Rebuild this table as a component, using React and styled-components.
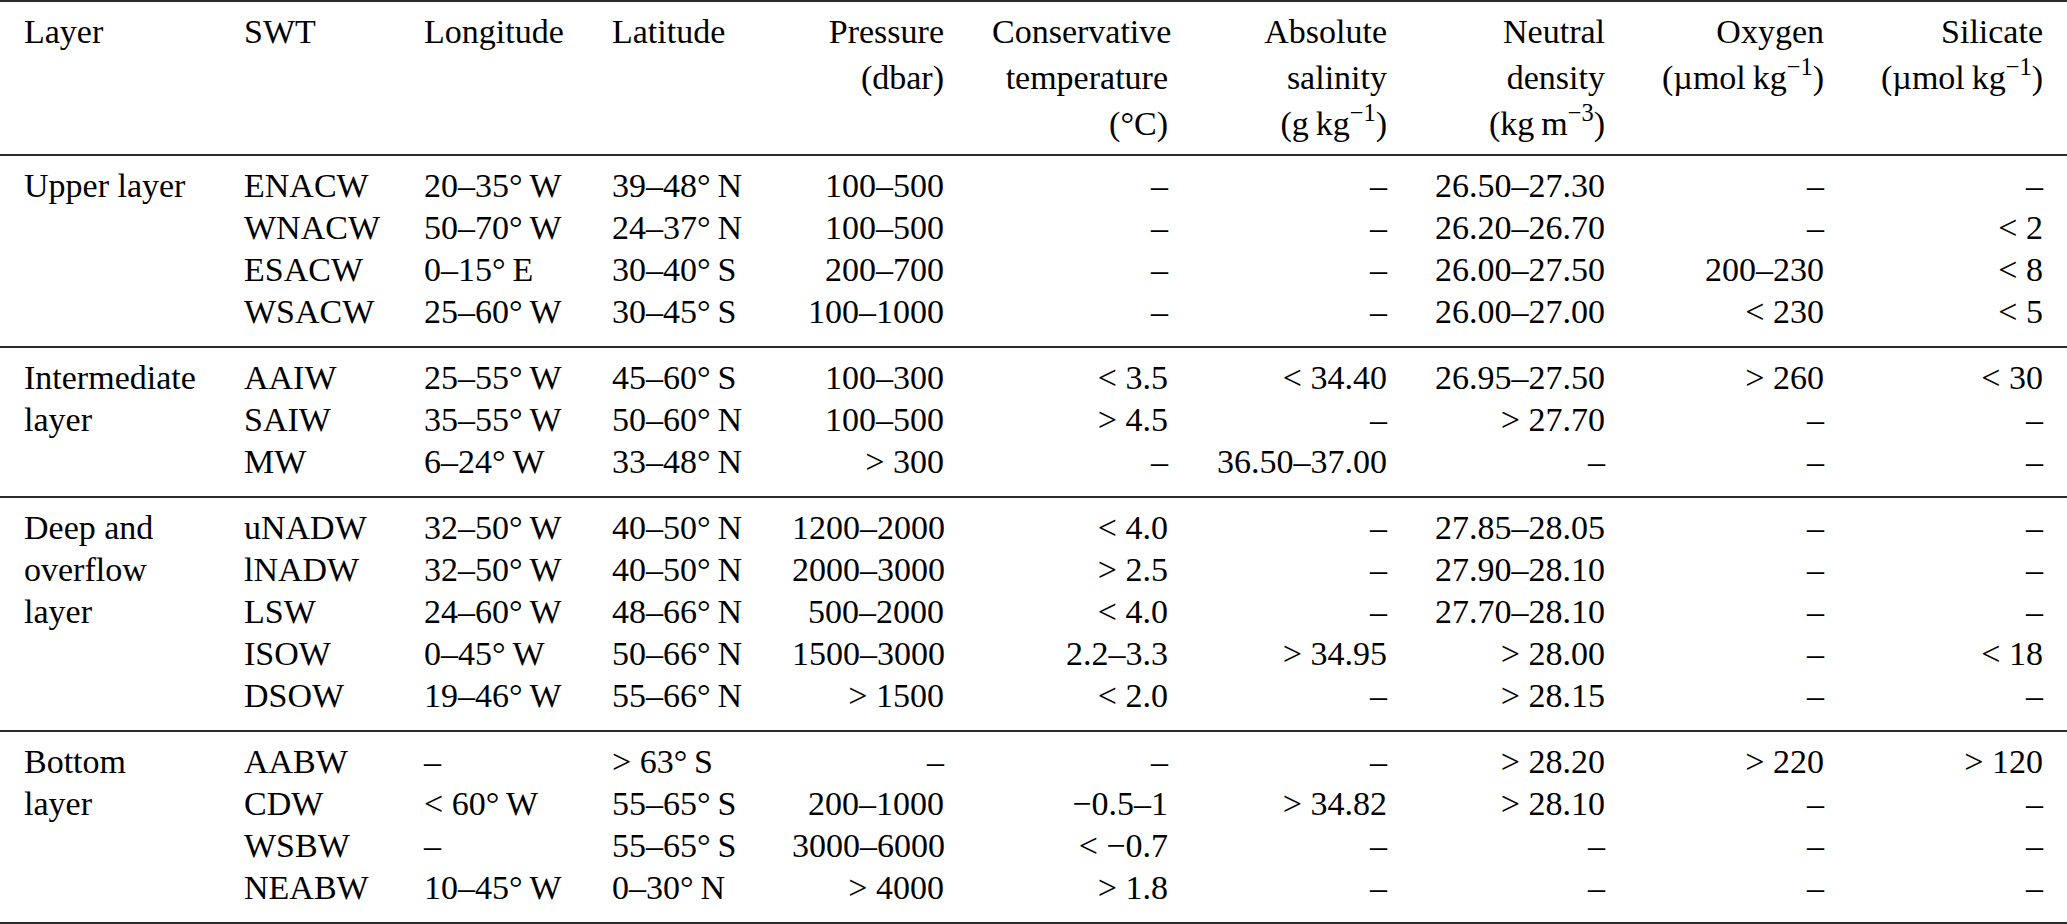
import React from 'react';
import styled, { createGlobalStyle } from 'styled-components';

const GlobalStyle = createGlobalStyle`
  html, body {
    margin: 0;
    padding: 0;
    background: #fff;
  }
  body {
    font-family: "Liberation Serif", "Times New Roman", serif;
    color: #000;
  }
`;

// column widths of the water-type table (cell edges incl. 24px padding)
const COLUMNS = '220px 180px 188px 180px 200px 224px 219px 218px 219px 219px';
const RULE = '2px solid #2b2b2b';

const Table = styled.div`
  width: 2067px;
  border-top: ${RULE};
  font-size: 34px;
`;

const HeaderRow = styled.div`
  display: grid;
  grid-template-columns: ${COLUMNS};
  padding: 7px 0;
  border-bottom: ${RULE};
`;

const HeadCell = styled.div`
  padding: 0 24px;
  line-height: 46px;
  text-align: ${p => (p.$right ? 'right' : 'left')};
  white-space: nowrap;
`;

const Section = styled.div`
  display: grid;
  grid-template-columns: ${COLUMNS};
  grid-auto-rows: 42px;
  padding: 9px 0 13px;
  border-bottom: ${RULE};
`;

const LayerCell = styled.div`
  grid-column: 1;
  grid-row: 1 / span ${p => p.$rows};
  padding: 0 24px;
  line-height: 42px;
`;

const Cell = styled.div`
  padding: 0 24px;
  line-height: 42px;
  text-align: ${p => (p.$right ? 'right' : 'left')};
  white-space: nowrap;
`;

const Sup = styled.span`
  font-size: 0.72em;
  position: relative;
  top: -0.58em;
  line-height: 0;
`;

const T = '\u2009'; // thin space
const N = '\u00a0';
const D = '–';

const headers = [
  { lines: ['Layer'] },
  { lines: ['SWT'] },
  { lines: ['Longitude'] },
  { lines: ['Latitude'] },
  { lines: ['Pressure', '(dbar)'], right: true },
  { lines: ['Conservative', 'temperature', '(°C)'], right: true },
  { lines: ['Absolute', 'salinity', <>(g{T}kg<Sup>−1</Sup>)</>], right: true },
  { lines: ['Neutral', 'density', <>(kg{T}m<Sup>−3</Sup>)</>], right: true },
  { lines: ['Oxygen', <>(µmol{T}kg<Sup>−1</Sup>)</>], right: true },
  { lines: ['Silicate', <>(µmol{T}kg<Sup>−1</Sup>)</>], right: true },
];

const sections = [
  {
    layer: ['Upper layer'],
    rows: [
      ['ENACW', `20–35°${T}W`, `39–48°${T}N`, '100–500', D, D, '26.50–27.30', D, D],
      ['WNACW', `50–70°${T}W`, `24–37°${T}N`, '100–500', D, D, '26.20–26.70', D, `<${N}2`],
      ['ESACW', `0–15°${T}E`, `30–40°${T}S`, '200–700', D, D, '26.00–27.50', '200–230', `<${N}8`],
      ['WSACW', `25–60°${T}W`, `30–45°${T}S`, '100–1000', D, D, '26.00–27.00', `<${N}230`, `<${N}5`],
    ],
  },
  {
    layer: ['Intermediate', 'layer'],
    rows: [
      ['AAIW', `25–55°${T}W`, `45–60°${T}S`, '100–300', `<${N}3.5`, `<${N}34.40`, '26.95–27.50', `>${N}260`, `<${N}30`],
      ['SAIW', `35–55°${T}W`, `50–60°${T}N`, '100–500', `>${N}4.5`, D, `>${N}27.70`, D, D],
      ['MW', `6–24°${T}W`, `33–48°${T}N`, `>${N}300`, D, '36.50–37.00', D, D, D],
    ],
  },
  {
    layer: ['Deep and', 'overflow', 'layer'],
    rows: [
      ['uNADW', `32–50°${T}W`, `40–50°${T}N`, '1200–2000', `<${N}4.0`, D, '27.85–28.05', D, D],
      ['lNADW', `32–50°${T}W`, `40–50°${T}N`, '2000–3000', `>${N}2.5`, D, '27.90–28.10', D, D],
      ['LSW', `24–60°${T}W`, `48–66°${T}N`, '500–2000', `<${N}4.0`, D, '27.70–28.10', D, D],
      ['ISOW', `0–45°${T}W`, `50–66°${T}N`, '1500–3000', '2.2–3.3', `>${N}34.95`, `>${N}28.00`, D, `<${N}18`],
      ['DSOW', `19–46°${T}W`, `55–66°${T}N`, `>${N}1500`, `<${N}2.0`, D, `>${N}28.15`, D, D],
    ],
  },
  {
    layer: ['Bottom', 'layer'],
    rows: [
      ['AABW', D, `>${N}63°${T}S`, D, D, D, `>${N}28.20`, `>${N}220`, `>${N}120`],
      ['CDW', `<${N}60°${T}W`, `55–65°${T}S`, '200–1000', '−0.5–1', `>${N}34.82`, `>${N}28.10`, D, D],
      ['WSBW', D, `55–65°${T}S`, '3000–6000', `<${N}−0.7`, D, D, D, D],
      ['NEABW', `10–45°${T}W`, `0–30°${T}N`, `>${N}4000`, `>${N}1.8`, D, D, D, D],
    ],
  },
];

export default function App() {
  return (
    <>
      <GlobalStyle />
      <Table>
        <HeaderRow>
          {headers.map((h, i) => (
            <HeadCell key={i} $right={h.right}>
              {h.lines.map((line, j) => (
                <React.Fragment key={j}>
                  {j > 0 && <br />}
                  {line}
                </React.Fragment>
              ))}
            </HeadCell>
          ))}
        </HeaderRow>

        {sections.map(sec => (
          <Section key={sec.layer.join(' ')}>
            <LayerCell $rows={sec.rows.length}>
              {sec.layer.map((l, j) => (
                <React.Fragment key={j}>
                  {j > 0 && <br />}
                  {l}
                </React.Fragment>
              ))}
            </LayerCell>
            {sec.rows.map(row =>
              row.map((val, c) => (
                <Cell key={row[0] + c} $right={c >= 3}>
                  {val}
                </Cell>
              ))
            )}
          </Section>
        ))}
      </Table>
    </>
  );
}
